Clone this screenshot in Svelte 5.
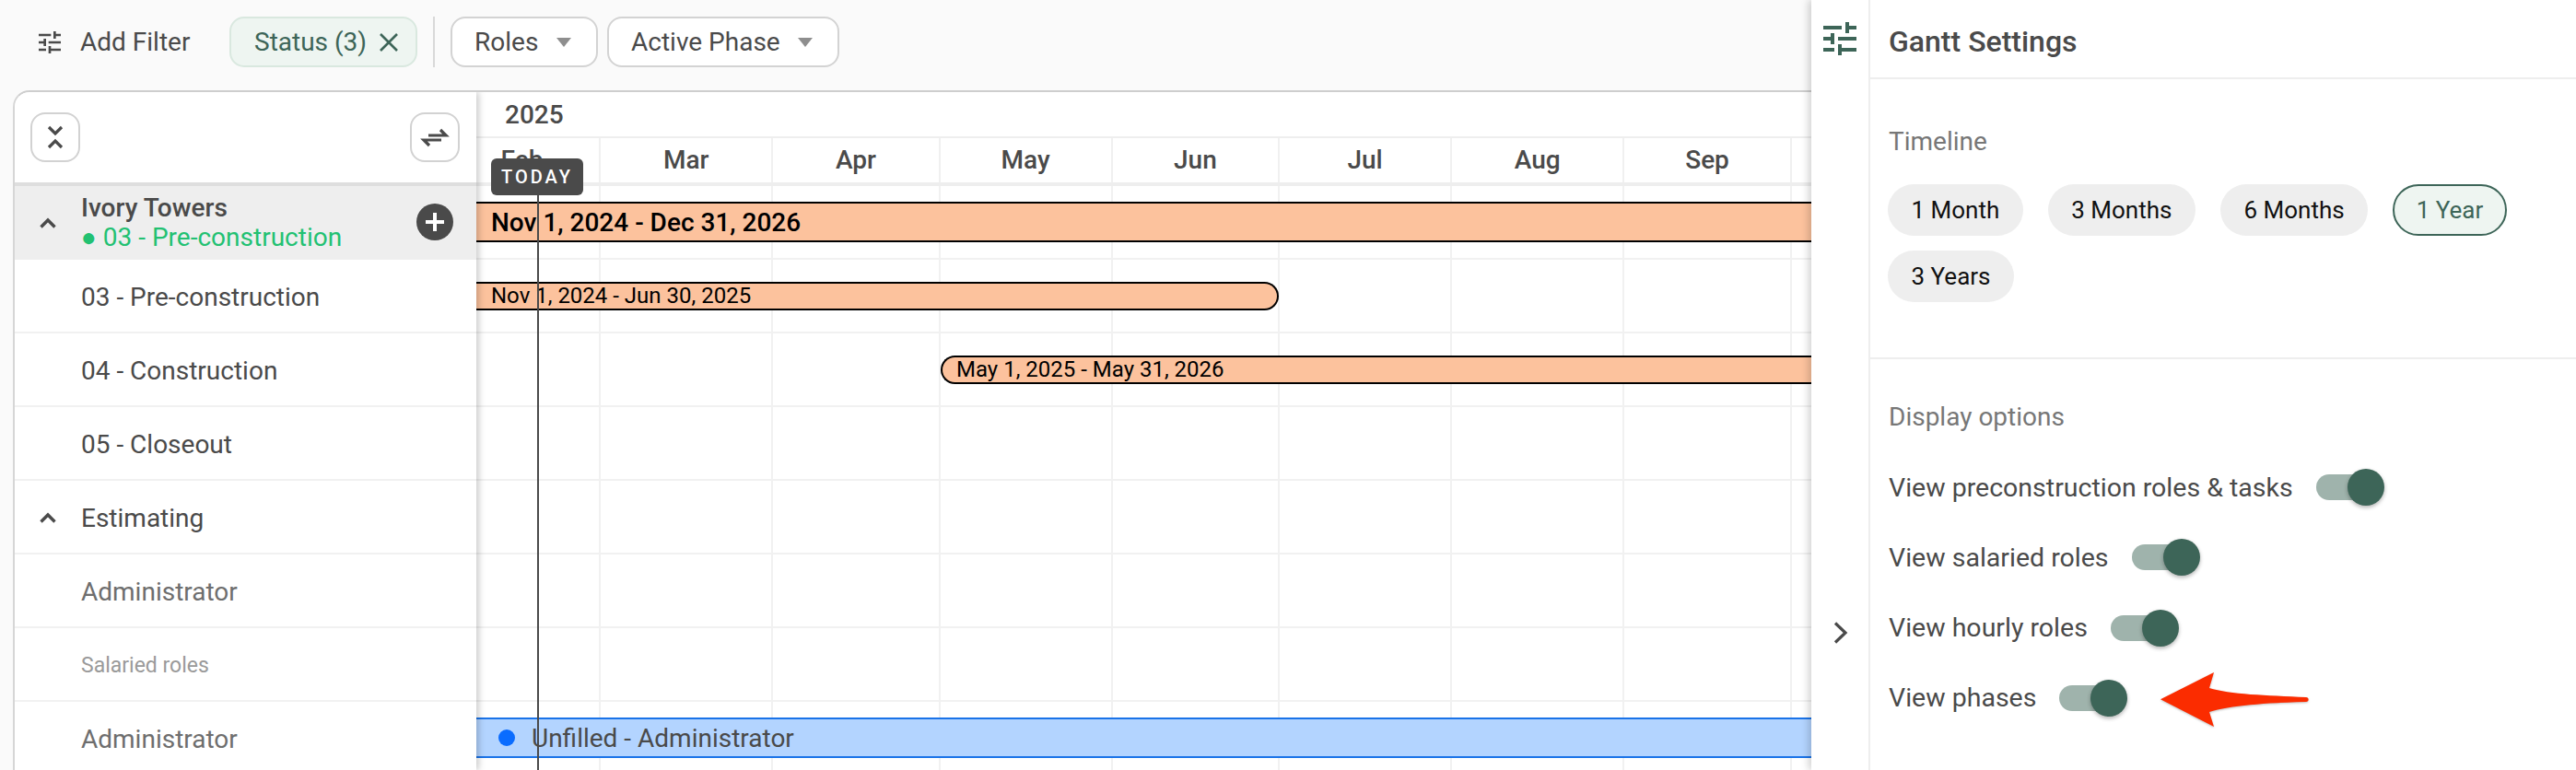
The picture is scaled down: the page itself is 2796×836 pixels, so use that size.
<script>
  const pxPerDay = 6.04;
  const months = [
    { name: 'Feb', days: 28 }, { name: 'Mar', days: 31 }, { name: 'Apr', days: 30 },
    { name: 'May', days: 31 }, { name: 'Jun', days: 30 }, { name: 'Jul', days: 31 },
    { name: 'Aug', days: 31 }, { name: 'Sep', days: 30 }, { name: 'Oct', days: 31 }
  ];
  const rows = [
    { label: '03 - Pre-construction', kind: 'dark' },
    { label: '04 - Construction', kind: 'dark' },
    { label: '05 - Closeout', kind: 'dark' },
    { label: 'Estimating', kind: 'dark', chevron: true },
    { label: 'Administrator', kind: 'muted' },
    { label: 'Salaried roles', kind: 'small' },
    { label: 'Administrator', kind: 'muted' }
  ];
  const timelines = ['1 Month', '3 Months', '6 Months', '1 Year', '3 Years'];
  const options = ['View preconstruction roles & tasks', 'View salaried roles', 'View hourly roles', 'View phases'];
</script>

{#snippet tune(cls)}
  <svg class={cls} viewBox="0 0 24 24" fill="currentColor"><path d="M3 17v2h6v-2H3zM3 5v2h10V5H3zm10 16v-2h8v-2h-8v-2h-2v6h2zM7 9v2H3v2h4v2h2V9H7zm14 4v-2H11v2h10zm-6-4h2V7h4V5h-4V3h-2v6z"/></svg>
{/snippet}

{#snippet chevron()}
  <svg class="chev" viewBox="0 0 18 12" fill="none" stroke="currentColor" stroke-width="3.4"><path d="M1.5 10.5 9 3l7.5 7.5"/></svg>
{/snippet}

{#snippet grid()}
  {#each months as m}
    <div class="col" style="width:{m.days * pxPerDay}px"></div>
  {/each}
{/snippet}

<div class="app">
  <main class="main">
    <header class="toolbar">
      <button class="add">{@render tune('tune-sm')}<span>Add Filter</span></button>
      <div class="chip active-chip">
        <span>Status (3)</span>
        <svg class="x" viewBox="0 0 22 22" fill="none" stroke="currentColor" stroke-width="2.6"><path d="M2 2l18 18M20 2 2 20"/></svg>
      </div>
      <div class="divider"></div>
      <div class="chip sel roles"><span>Roles</span><i class="caret"></i></div>
      <div class="chip sel phase"><span>Active Phase</span><i class="caret"></i></div>
    </header>

    <section class="board">
      <aside class="side">
        <div class="side-head">
          <button class="square" aria-label="Collapse">
            <svg viewBox="2 2 50 50" fill="none" stroke="currentColor" stroke-width="3.2"><path d="M20 16l7 7 7-7M20 38l7-7 7 7"/></svg>
          </button>
          <button class="square" aria-label="Swap">
            <svg viewBox="2 2 50 50" fill="none" stroke="currentColor" stroke-width="3.2"><path d="M20 25h19l-6-6M34 30H15l6 6"/></svg>
          </button>
        </div>
        <div class="project">
          {@render chevron()}
          <div class="project-text">
            <div class="p-name">Ivory Towers</div>
            <div class="p-status">● 03 - Pre-construction</div>
          </div>
          <div class="plus"><i></i><i class="v"></i></div>
        </div>
        {#each rows as r}
          <div class="row {r.kind}">
            {#if r.chevron}{@render chevron()}{/if}
            <span>{r.label}</span>
          </div>
        {/each}
      </aside>

      <div class="gantt">
        <div class="year">2025</div>
        <div class="months">
          {#each months as m}
            <div class="month" style="width:{m.days * pxPerDay}px">{m.name}</div>
          {/each}
        </div>
        <div class="body">
          <div class="gridlines">{@render grid()}</div>
          <div class="g-row"><div class="bar big">Nov 1, 2024 - Dec 31, 2026</div></div>
          <div class="g-row"><div class="bar mid">Nov 1, 2024 - Jun 30, 2025</div></div>
          <div class="g-row"><div class="bar late">May 1, 2025 - May 31, 2026</div></div>
          <div class="g-row"></div>
          <div class="g-row"></div>
          <div class="g-row"></div>
          <div class="g-row"></div>
          <div class="g-row"><div class="bar blue"><i class="dot"></i>Unfilled - Administrator</div></div>
        </div>
        <div class="today-line"></div>
        <div class="today">TODAY</div>
      </div>
    </section>
  </main>

  <aside class="settings">
    <div class="rail">
      {@render tune('tune-lg')}
      <svg class="rail-chev" viewBox="0 0 16 24" fill="none" stroke="currentColor" stroke-width="3.2"><path d="M2 1.5 13 12 2 22.5"/></svg>
    </div>
    <div class="panel">
      <h2>Gantt Settings</h2>
      <div class="sec timeline">
        <div class="sec-title">Timeline</div>
        <div class="pills">
          {#each timelines as t}
            <div class="pill" class:on={t === '1 Year'}>{t}</div>
          {/each}
        </div>
      </div>
      <div class="sec display">
        <div class="sec-title">Display options</div>
        <div class="opts">
          {#each options as o}
            <div class="opt">
              <span>{o}</span>
              <div class="toggle"><i></i></div>
            </div>
          {/each}
        </div>
      </div>
    </div>
    <svg class="arrow" viewBox="0 0 170 70" fill="#fb2c00">
      <path d="M5 34.3 63 5 58 22C80 29 120 30 163 32C166.500 32 166.500 37 163 37C120 38 80 41 58 48L63 64Z"/>
    </svg>
  </aside>
</div>

<style>
  :global(body) { margin: 0; }
  * { box-sizing: border-box; }
  .app {
    display: flex; width: 2796px; height: 836px; overflow: hidden;
    font-family: Roboto, "Liberation Sans", sans-serif; color: #4a4a4a; background: #fff;
  }
  button { font: inherit; color: inherit; background: none; border: 0; padding: 0; }
  .main { width: 1966px; flex: none; display: flex; flex-direction: column; background: #fafafa; }

  .toolbar { height: 98px; flex: none; display: flex; align-items: center; padding: 0 0 7px 38px; font-size: 28px; }
  .add { display: flex; align-items: center; gap: 17px; font-size: 28px; width: 211px; }
  .tune-sm { width: 32px; height: 32px; }
  .chip { height: 55px; display: flex; align-items: center; border-radius: 16px; border: 2px solid #d3d3d3; background: #fff; }
  .active-chip { width: 204px; background: #eef5f1; border-color: #d9e8df; color: #3d6558; padding-left: 25px; gap: 13px; }
  .x { width: 22px; height: 22px; }
  .divider { width: 2px; height: 55px; background: #d8d8d8; margin: 0 17px; }
  .sel { justify-content: space-between; padding: 0 27px 0 24px; }
  .roles { width: 160px; margin-right: 10px; }
  .phase { width: 252px; }
  .caret { width: 0; height: 0; border-left: 8.500px solid transparent; border-right: 8.500px solid transparent; border-top: 10px solid #8e8e8e; }

  .board {
    flex: 1; min-height: 0; display: flex; margin-left: 14px; background: #fff;
    border-top: 2px solid #cecece; border-left: 2px solid #d6d6d6; border-top-left-radius: 18px; overflow: hidden;
  }
  .side { width: 501px; flex: none; background: #fff; position: relative; z-index: 3; box-shadow: 3px 0 7px rgba(0,0,0,.2); }
  .side-head { height: 102px; padding: 22px 18px 0 17px; display: flex; justify-content: space-between; align-items: flex-start; border-bottom: 4px solid #dedede; }
  .square { width: 54px; height: 54px; border: 2px solid #d2d2d2; border-radius: 16px; background: #fff; display: block; }
  .square svg { display: block; width: 50px; height: 50px; margin: 0; }
  .project { height: 80px; background: #eee; display: flex; align-items: center; padding-left: 27px; position: relative; }
  .chev { width: 18px; height: 12px; flex: none; color: #4a4a4a; margin-right: 27px; }
  .p-name { font-size: 28px; font-weight: 500; line-height: 32px; }
  .p-status { font-size: 28px; line-height: 32px; color: #22c172; }
  .plus { position: absolute; right: 25px; top: 19px; width: 40px; height: 40px; border-radius: 50%; background: #4a4a4a; }
  .plus i { position: absolute; left: 10px; top: 18px; width: 20px; height: 4px; background: #fff; }
  .plus i.v { left: 18px; top: 10px; width: 4px; height: 20px; }
  .row { height: 80px; border-bottom: 2px solid #f1f1f1; display: flex; align-items: center; padding: 2px 0 0 27px; font-size: 28px; }
  .row span { margin-left: 45px; }
  .row .chev + span { margin-left: 0; }
  .row.muted { color: #6e6e6e; }
  .row.small { color: #9a9a9a; font-size: 23px; }

  .gantt { flex: 1; min-width: 0; position: relative; overflow: hidden; background: #fff; }
  .year { height: 50px; border-bottom: 2px solid #eee; padding: 8px 0 0 31px; font-size: 28px; font-weight: 500; line-height: 34px; }
  .months { height: 52px; display: flex; margin-left: -34px; border-bottom: 4px solid #eee; }
  .month { flex: none; text-align: center; font-size: 28px; font-weight: 500; line-height: 48px; border-right: 2px solid #f0f0f0; }
  .body { position: relative; }
  .gridlines { position: absolute; inset: 0 auto 0 -34px; display: flex; }
  .col { flex: none; border-right: 2px solid #f1f1f1; height: 100%; }
  .g-row { height: 80px; border-bottom: 2px solid #f1f1f1; position: relative; display: flex; align-items: center; }
  .bar { position: absolute; left: 0; background: #fcc29d; color: #000; display: flex; align-items: center; padding-left: 16px; white-space: nowrap; border: 2px solid #000; }
  .big { height: 44px; width: 1500px; border-width: 2px 0; font-size: 28px; font-weight: 500; }
  .mid { height: 31px; width: 871px; border-left: 0; border-radius: 0 16px 16px 0; font-size: 24px; }
  .late { left: 504px; height: 31px; width: 1000px; border-right: 0; border-radius: 16px 0 0 16px; font-size: 24px; padding-left: 15px; }
  .blue { height: 44px; width: 1500px; background: #b3d4ff; border-color: #1a73e8; border-width: 2px 0; color: #4a4a4a; font-size: 28px; padding-left: 24px; gap: 18px; }
  .dot { width: 18px; height: 18px; border-radius: 50%; background: #0a6cff; }
  .today-line { position: absolute; left: 66px; top: 110px; bottom: 0; width: 2px; background: #4a4a4a; z-index: 2; }
  .today { position: absolute; left: 16px; top: 72px; width: 100px; height: 40px; border-radius: 6px; background: #4a4a4a; color: #fff; font-size: 20px; font-weight: 500; letter-spacing: 3px; display: flex; align-items: center; justify-content: center; z-index: 2; }

  .settings { width: 830px; flex: none; display: flex; background: #fff; position: relative; z-index: 4; box-shadow: -3px 0 8px rgba(0,0,0,.18); }
  .rail { width: 64px; flex: none; border-right: 2px solid #eee; position: relative; }
  .tune-lg { position: absolute; left: 7px; top: 18px; width: 48px; height: 48px; color: #3d6558; }
  .rail-chev { position: absolute; left: 24px; top: 675px; width: 16px; height: 24px; color: #4a4a4a; }
  .panel { flex: 1; min-width: 0; }
  h2 { margin: 0; height: 86px; border-bottom: 2px solid #eee; padding: 27px 0 0 20px; font-size: 32px; font-weight: 500; line-height: 36px; }
  .sec { padding: 52px 60px 0 20px; }
  .timeline { height: 304px; border-bottom: 2px solid #eee; }
  .sec-title { font-size: 28px; line-height: 32px; color: #777; }
  .pills { display: flex; flex-wrap: wrap; gap: 16px 27px; margin-top: 30px; margin-left: -1px; }
  .pill { height: 56px; padding: 0 25.500px; border-radius: 28px; background: #eee; color: #111; font-size: 26px; display: flex; align-items: center; }
  .pill.on { background: #eef5f1; color: #3d6558; border: 2px solid #3d6558; padding: 0 23.500px; }
  .display { padding-top: 47px; }
  .opts { margin-top: 40px; display: flex; flex-direction: column; gap: 36.300px; }
  .opt { height: 40px; display: flex; align-items: center; gap: 25px; font-size: 28.500px; }
  .toggle { width: 74px; height: 28px; border-radius: 14px 0 0 14px; position: relative; background: linear-gradient(90deg, #9fb3ac 50px, transparent 50px); }
  .toggle i { position: absolute; right: 0; top: -6px; width: 40px; height: 40px; border-radius: 50%; background: #3d6558; box-shadow: 0 2px 4px rgba(0,0,0,.3); }
  .arrow { position: absolute; left: 374px; top: 725px; width: 170px; height: 70px; filter: drop-shadow(0 1px 1px rgba(0,0,0,.25)); }
</style>
